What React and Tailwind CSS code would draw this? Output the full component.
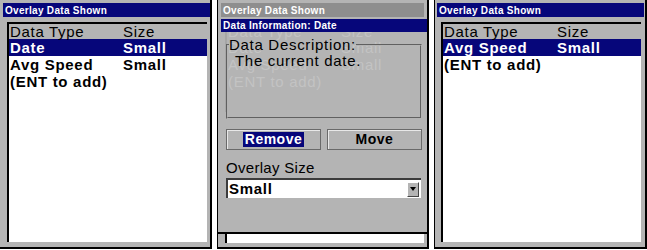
import React from "react";

const rowsA = [
  ["Date", "Small"],
  ["Avg Speed", "Small"],
  ["(ENT to add)", ""],
];

const rowsB = [
  ["Avg Speed", "Small"],
  ["(ENT to add)", ""],
];

const ListBox = ({ rows, ghost }) => (
  <div
    className={
      ghost
        ? "h-full border-l-2 border-t-2 border-[#a6a6a6] text-[#c3c3c3]"
        : "h-full border-l-2 border-t-2 border-black bg-white text-black"
    }
  >
    <div
      className={
        ghost
          ? "flex h-[15px] items-center leading-[15px]"
          : "flex h-[15px] items-center bg-[#b4b4b4] leading-[15px]"
      }
    >
      <span className="w-[114px] pl-[1px]">Data Type</span>
      <span>Size</span>
    </div>
    {rows.map(([name, size], i) => (
      <div
        key={name}
        className={
          ghost
            ? "flex h-[17px] items-center leading-[17px]"
            : i === 0
            ? "flex h-[17px] items-center bg-[#06067a] font-bold leading-[17px] text-white"
            : "flex h-[17px] items-center font-bold leading-[17px]"
        }
      >
        <span className="w-[114px] pl-[1px]">{name}</span>
        <span>{size}</span>
      </div>
    ))}
  </div>
);

const Title = ({ children, gray }) => (
  <div
    className={
      gray
        ? "flex h-[14px] items-center bg-[#8e8e8e] pl-[2px] text-[10px] font-bold tracking-[0.3px] text-white"
        : "flex h-[14px] items-center bg-[#06067a] pl-[2px] text-[10px] font-bold tracking-[0.3px] text-white"
    }
  >
    {children}
  </div>
);

const ListPanel = ({ rows, className }) => (
  <div className={className}>
    <Title>Overlay Data Shown</Title>
    <div className="mb-[5px] ml-[4px] mr-[3px] mt-[5px] flex-1">
      <ListBox rows={rows} />
    </div>
  </div>
);

const InfoPanel = () => (
  <div className="flex h-[249px] w-[212px] flex-col border-b-2 border-l border-r-2 border-black bg-[#b4b4b4]">
    <div className="px-[3px] pt-[3px]">
      <Title gray>Overlay Data Shown</Title>
    </div>

    {/* dialog laid over the list */}
    <div className="relative h-[217px] border-b-2 border-black">
      <div className="absolute left-[7px] right-[3px] top-[5px] h-[90px]">
        <ListBox rows={rowsA} ghost />
      </div>

      <div className="relative flex flex-col">
        <div className="ml-[3px] mt-[2px] flex h-[13px] items-center bg-[#06067a] pl-[2px] text-[10px] font-bold tracking-[0.3px] text-white">
          Data Information: Date
        </div>

        <fieldset className="ml-[8px] mt-[5px] h-[82px] w-[196px] border-2 border-[#b4b4b4] pl-[1px] [border-style:groove]">
          <legend className="text-[15px] leading-[16px]">Data Description:</legend>
          <p className="pl-[6px] text-[15px] leading-[15px]">The current date.</p>
        </fieldset>

        <div className="ml-[8px] mt-[10px] flex gap-[6px]">
          <div className="flex h-[21px] w-[95px] items-center justify-center border border-[#6a6a6a] shadow-[inset_1px_1px_0_#e8e8e8]">
            <span className="bg-[#06067a] px-[2px] text-[14px] font-bold leading-[15px] tracking-[0.5px] text-white">
              Remove
            </span>
          </div>
          <div className="flex h-[21px] w-[95px] items-center justify-center border border-[#6a6a6a] shadow-[inset_1px_1px_0_#e8e8e8]">
            <span className="text-[14px] font-bold leading-[15px] tracking-[0.5px]">Move</span>
          </div>
        </div>

        <div className="ml-[8px] mt-[10px] text-[15px] leading-[16px] tracking-[0.3px]">Overlay Size</div>

        <div className="ml-[8px] mt-[2px] flex h-[20px] w-[195px] items-center justify-between border-l-2 border-t-2 border-[#3c3c3c] bg-white">
          <span className="pl-[1px] text-[15px] font-bold leading-[16px]">Small</span>
          <div className="mr-[2px] flex h-[15px] w-[12px] items-center justify-center border border-b-[#444] border-l-white border-r-[#444] border-t-white bg-[#b4b4b4]">
            <svg width="6" height="4" viewBox="0 0 6 4">
              <path d="M0 0H6L3 4Z" fill="#000" />
            </svg>
          </div>
        </div>
      </div>
    </div>

    <div className="ml-[7px] mr-[3px] h-[9px] border-l-2 border-black bg-white" />
  </div>
);

export default function App() {
  return (
    <div className="flex h-[250px] w-[647px] gap-[5px] bg-white font-['Liberation_Sans',Arial,sans-serif] text-[15px] tracking-[0.7px] text-black">
      <ListPanel
        rows={rowsA}
        className="flex h-[249px] w-[212px] flex-col border-b-2 border-r-2 border-black bg-[#b4b4b4] pl-[3px] pt-[3px]"
      />
      <InfoPanel />
      <ListPanel
        rows={rowsB}
        className="flex h-[249px] w-[213px] flex-col border-b-2 border-l border-r-2 border-black bg-[#b4b4b4] pl-[2px] pr-[1px] pt-[3px]"
      />
    </div>
  );
}
